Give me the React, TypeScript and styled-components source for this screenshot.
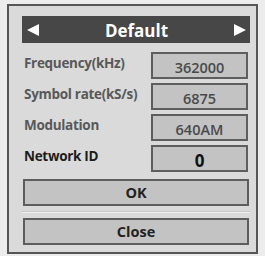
import styled, { createGlobalStyle } from 'styled-components'

const GlobalStyle = createGlobalStyle`
	body {
		margin: 0;
		background: #ececec;
		font-family: 'Open Sans', 'Liberation Sans', sans-serif;
	}
`

const fields = [
	{ label: 'Frequency(kHz)', value: '362000' },
	{ label: 'Symbol rate(kS/s)', value: '6875' },
	{ label: 'Modulation', value: '640AM' },
	{ label: 'Network ID', value: '0', active: true },
]

export default function App() {
	return (
		<>
			<GlobalStyle />
			<Dialog>
				<TitleBar>
					<Arrow $dir={'left'} />
					<Title>Default</Title>
					<Arrow $dir={'right'} />
				</TitleBar>
				<Fields>
					{fields.map((f) => (
						<FieldRow key={f.label}>
							<Label $active={f.active}>{f.label}</Label>
							<ValueBox $active={f.active}>{f.value}</ValueBox>
						</FieldRow>
					))}
				</Fields>
				<Button>OK</Button>
				<Separator />
				<Button>Close</Button>
			</Dialog>
		</>
	)
}

const Dialog = styled.div`
	box-sizing: border-box;
	width: 251px;
	height: 250px;
	margin: 4px 0 0 7px;
	padding: 10px 6px 0 13px;
	background: #dadada;
	border: 2px solid #555;
	display: flex;
	flex-direction: column;
`
const TitleBar = styled.div`
	height: 27px;
	background: #474747;
	display: flex;
	align-items: center;
	justify-content: space-between;
	padding: 0 4px 0 5px;
`
const Title = styled.span`
	color: #fff;
	font-size: 17px;
	font-weight: 700;
	line-height: 1;
	margin-top: 1px;
`
const Arrow = styled.span<{ $dir: 'left' | 'right' }>`
	width: 0;
	height: 0;
	border-top: 6px solid transparent;
	border-bottom: 6px solid transparent;
	${({ $dir }) => ($dir === 'left' ? 'border-right: 12px solid #fff;' : 'border-left: 12px solid #fff;')}
`
const Fields = styled.div`
	display: flex;
	flex-direction: column;
	gap: 4px;
	margin-top: 9px;
`
const FieldRow = styled.div`
	display: grid;
	grid-template-columns: 1fr 97px;
	padding-right: 2px;
	height: 27px;
`
const Label = styled.span<{ $active?: boolean }>`
	font-size: 13.5px;
	font-weight: 700;
	letter-spacing: -0.3px;
	color: ${({ $active }) => ($active ? '#1c1c1c' : '#585858')};
	padding: 1px 0 0 2px;
	line-height: 20px;
`
const ValueBox = styled.div<{ $active?: boolean }>`
	box-sizing: border-box;
	height: 27px;
	border: 2px solid #5e5e5e;
	background: #c3c3c3;
	display: flex;
	align-items: center;
	justify-content: center;
	padding-top: 3px;
	font-size: ${({ $active }) => ($active ? '17px' : '14.5px')};
	font-weight: ${({ $active }) => ($active ? 700 : 600)};
	color: ${({ $active }) => ($active ? '#111' : '#4a4a4a')};
`
const Button = styled.div`
	box-sizing: border-box;
	height: 27px;
	margin: 7px 1px 0 1px;
	border: 2px solid #5e5e5e;
	background: #c3c3c3;
	display: flex;
	align-items: center;
	justify-content: center;
	font-size: 14.5px;
	font-weight: 700;
	color: #222;
`
const Separator = styled.div`
	height: 1px;
	margin: 5px 0 -2px 0;
	background: #c8c8c8;
	border-bottom: 1px solid #f0f0f0;
`
